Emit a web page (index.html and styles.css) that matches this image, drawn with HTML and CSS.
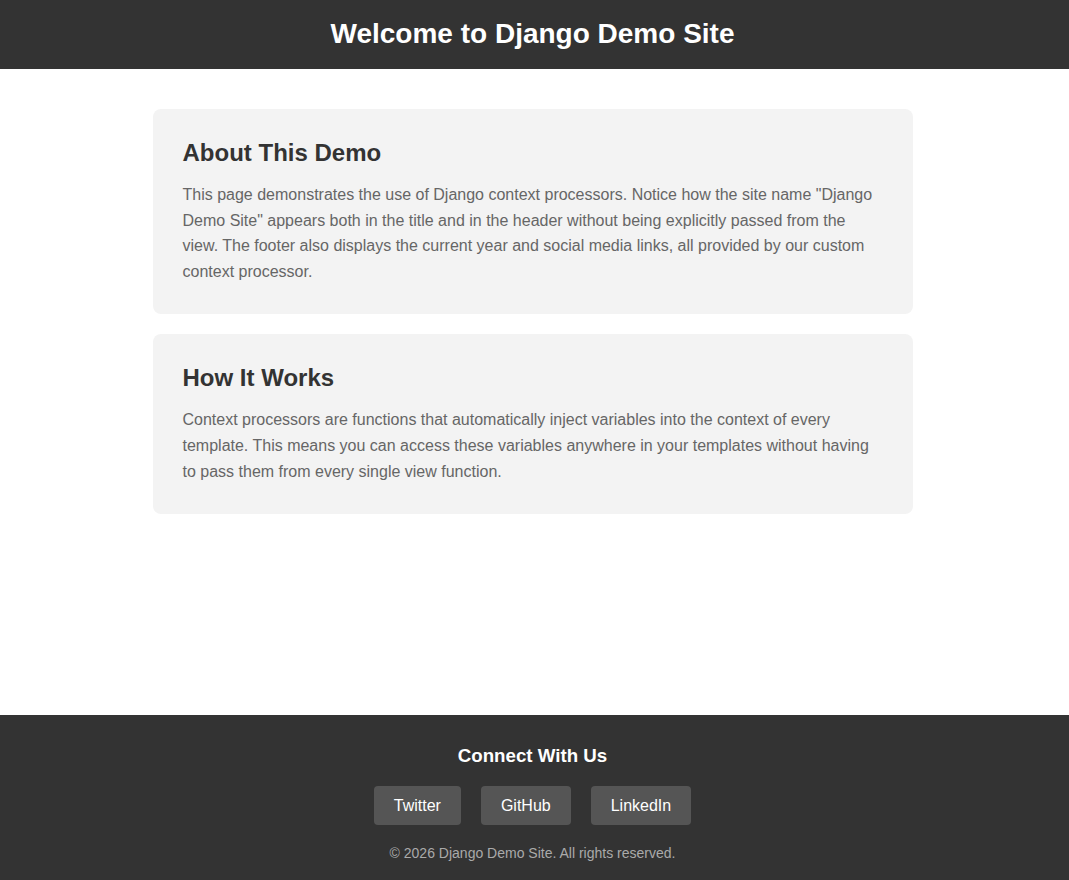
FILE: index.html
```html
<!DOCTYPE html>
<html lang="en">
<head>
    <meta charset="UTF-8">
    <meta name="viewport" content="width=device-width, initial-scale=1.0">
    <title>Django Demo Site</title>
    <link rel="stylesheet" href="styles.css">
</head>
<body>
    <header class="site-header">
        <h1>Welcome to Django Demo Site</h1>
    </header>

    <main class="container">
        <div class="card">
            <h2>About This Demo</h2>
            <p>This page demonstrates the use of Django context processors. Notice how the site name "Django Demo Site" appears both in the title and in the header without being explicitly passed from the view. The footer also displays the current year and social media links, all provided by our custom context processor.</p>
        </div>
        <div class="card">
            <h2>How It Works</h2>
            <p>Context processors are functions that automatically inject variables into the context of every template. This means you can access these variables anywhere in your templates without having to pass them from every single view function.</p>
        </div>
    </main>

    <footer class="site-footer">
        <h3>Connect With Us</h3>
        <div class="social-links">
            <a href="#">Twitter</a>
            <a href="#">GitHub</a>
            <a href="#">LinkedIn</a>
        </div>
        <p class="copyright">&copy; 2026 Django Demo Site. All rights reserved.</p>
    </footer>
</body>
</html>
```

FILE: styles.css
```css
body {
    margin: 0;
    padding-right: 4px;
    font-family: "Liberation Sans", Arial, sans-serif;
    color: #333;
    background-color: #fff;
    min-height: 100vh;
    display: flex;
    flex-direction: column;
}

.site-header {
    background-color: #333;
    color: #fff;
    text-align: center;
    padding: 18px 0 19px;
    margin-right: -4px;
    padding-right: 4px;
}

.site-header h1 {
    margin: 0;
    font-size: 28px;
    line-height: 32px;
}

.container {
    width: 760px;
    margin: 40px auto;
    flex: 1;
}

.card {
    background-color: #f3f3f3;
    border-radius: 8px;
    padding: 30px;
    margin-bottom: 20px;
}

.card h2 {
    margin: 0 0 15px;
    font-size: 24px;
    color: #333;
}

.card p {
    margin: 0;
    font-size: 16px;
    line-height: 1.6;
    color: #666;
}

.site-footer {
    background-color: #333;
    color: #fff;
    text-align: center;
    padding: 30px 4px 19px 0;
    margin-right: -4px;
}

.site-footer h3 {
    margin: 0;
    font-size: 1.17em;
    line-height: 21px;
}

.social-links {
    display: flex;
    justify-content: center;
    gap: 20px;
    margin-top: 20px;
}

.social-links a {
    background-color: #555;
    color: #fff;
    text-decoration: none;
    padding: 10px 20px;
    border-radius: 4px;
    font-size: 16px;
    line-height: 19px;
}

.copyright {
    margin: 20px 0 0;
    font-size: 14px;
    color: #aaa;
}
```
